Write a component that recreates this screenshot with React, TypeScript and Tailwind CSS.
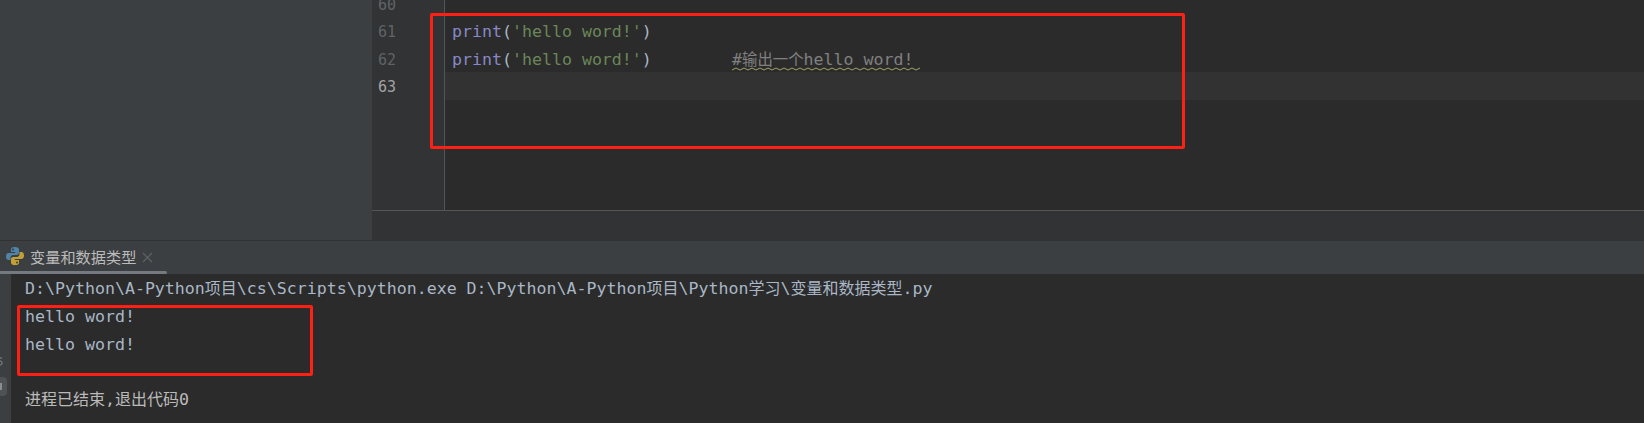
const mono = "font-['DejaVu_Sans_Mono','Liberation_Mono','Noto_Sans_CJK_SC',monospace]";

function C({ children }: { children: string }) {
  return <span className="font-['Noto_Sans_CJK_SC',sans-serif] text-[16px] leading-none">{children}</span>;
}

function PythonIcon() {
  return (
    <svg width="20" height="20" viewBox="0 0 20 20" className="shrink-0">
      <path d="M10 1C6.5 1 6 2.3 6 3.6V6h4.2v1H3.6C2 7 1 8.3 1 10.4 1 12.6 2 14 3.6 14H5.500v-2.200C5.500 10.200 6.700 9 8.300 9h3.500C13 9 14 8 14 6.800V3.600C14 2.200 12.800 1 10 1Z" fill="#4f83a8" />
      <path d="M10 19c3.500 0 4-1.300 4-2.600V14H9.800v-1h6.600c1.600 0 2.600-1.300 2.600-3.400C19 7.400 18 6 16.400 6H14.500v2.200c0 1.600-1.200 2.800-2.800 2.800H8.200C7 11 6 12 6 13.200v3.200C6 17.800 7.200 19 10 19Z" fill="#c2a033" />
      <circle cx="8" cy="3.500" r="0.900" fill="#313335" />
      <circle cx="12" cy="16.500" r="0.900" fill="#313335" />
    </svg>
  );
}

function Wavy() {
  return (
    <svg width="189" height="4" viewBox="0 0 189 4" className="absolute left-0 top-[21px]">
      <path
        d={Array.from({ length: 48 }, (_, i) => `${i === 0 ? "M" : "L"}${i * 4} ${i % 2 === 0 ? 3 : 1}`).join(" ")}
        fill="none"
        stroke="#a3a36a"
        strokeWidth="1"
      />
    </svg>
  );
}

function Code() {
  return (
    <>
      <span className="text-[#8888c6]">print</span>
      <span className="text-[#a9b7c6]">(</span>
      <span className="text-[#6a8759]">'hello word!'</span>
      <span className="text-[#a9b7c6]">)</span>
    </>
  );
}

export default function App() {
  return (
    <div className={`relative flex h-[423px] w-[1644px] flex-col overflow-hidden bg-[#3c3f41] text-[16.6px] ${mono}`}>
      <div className="flex h-[240px] shrink-0">
        <div className="w-[372px] shrink-0 bg-[#3c3f41]" />
        <div className="flex min-w-0 flex-1 flex-col">
          <div className="flex h-[210px] overflow-hidden bg-[#2b2b2b] leading-[27.4px]">
            <div className="-mt-[8px] h-[240px] w-[72px] shrink-0 bg-[#313335] pl-[6px] text-[15px] text-[#606366]">
              <div className="h-[27.4px]">60</div>
              <div className="h-[27.4px]">61</div>
              <div className="h-[27.4px]">62</div>
              <div className="h-[27.4px] text-[#a4a3a3]">63</div>
            </div>
            <div className="h-full w-px shrink-0 bg-[#555555]" />
            <div className="-mt-[9px] min-w-0 flex-1">
              <div className="h-[27.4px]" />
              <div className="h-[27.4px] pl-[7px]">
                <Code />
              </div>
              <div className="flex h-[27.4px] pl-[7px]">
                <span className="w-[280px]">
                  <Code />
                </span>
                <span className="relative text-[#808080]">
                  #<span className="font-['Noto_Sans_CJK_SC',sans-serif] text-[15.4px] leading-none">输出一个</span>hello word!
                  <Wavy />
                </span>
              </div>
              <div className="-mt-[1px] h-[28px] bg-[#323232]" />
            </div>
          </div>
          <div className="h-px bg-[#555555]" />
          <div className="flex-1 bg-[#313335]" />
        </div>
      </div>

      <div className="h-px shrink-0 bg-[#323232]" />

      <div className="relative flex h-[33px] shrink-0 items-center bg-[#3c3f41] pb-[3px] pl-[5px]">
        <PythonIcon />
        <span className="ml-[5px] font-['Noto_Sans_CJK_SC',sans-serif] text-[15.2px] text-[#bbbbbb]">变量和数据类型</span>
        <svg width="11" height="11" viewBox="0 0 11 11" className="ml-[6px] mt-[3px]">
          <path d="M1 1l9 9M10 1l-9 9" stroke="#5f6264" strokeWidth="1.2" />
        </svg>
        <div className="absolute bottom-0 left-0 h-[3px] w-[167px] rounded-r-sm bg-[#747a80]" />
      </div>

      <div className="flex min-h-0 flex-1">
        <div className="relative w-[11px] shrink-0 bg-[#3c3f41]">
          <svg width="3" height="9" viewBox="0 0 3 9" className="absolute left-0 top-[83px]">
            <path d="M0 1h2M0 4c1.500 0 2 .5 2 2s-.5 2-2 2" fill="none" stroke="#8a8e91" strokeWidth="1" />
          </svg>
          <div className="absolute left-0 top-[103px] h-[19px] w-[7px] rounded-r bg-[#4e5254]">
            <div className="mt-[6px] h-[7px] w-[2px] bg-[#8a8e91]" />
          </div>
        </div>
        <div className="flex-1 bg-[#2b2b2b] pl-[14px] pt-[1px] leading-[27.4px] text-[#a9b7c6]">
          <div>
            D:\Python\A-Python<C>项目</C>\cs\Scripts\python.exe D:\Python\A-Python<C>项目</C>\Python<C>学习</C>\<C>变量和数据类型</C>.py
          </div>
          <div className="pt-[1px]">hello word!</div>
          <div className="-mt-[1px] pt-[1px]">hello word!</div>
          <div className="h-[27.4px]" />
          <div className="text-[#bbbbbb]">
            <C>进程已结束</C>,<C>退出代码</C>0
          </div>
        </div>
      </div>

      <div className="absolute left-[430px] top-[13px] h-[136px] w-[755px] rounded-[2px] border-[3px] border-[#ff2015]" />
      <div className="absolute left-[17px] top-[305px] h-[71px] w-[296px] rounded-[2px] border-[3px] border-[#ff2015]" />
    </div>
  );
}
